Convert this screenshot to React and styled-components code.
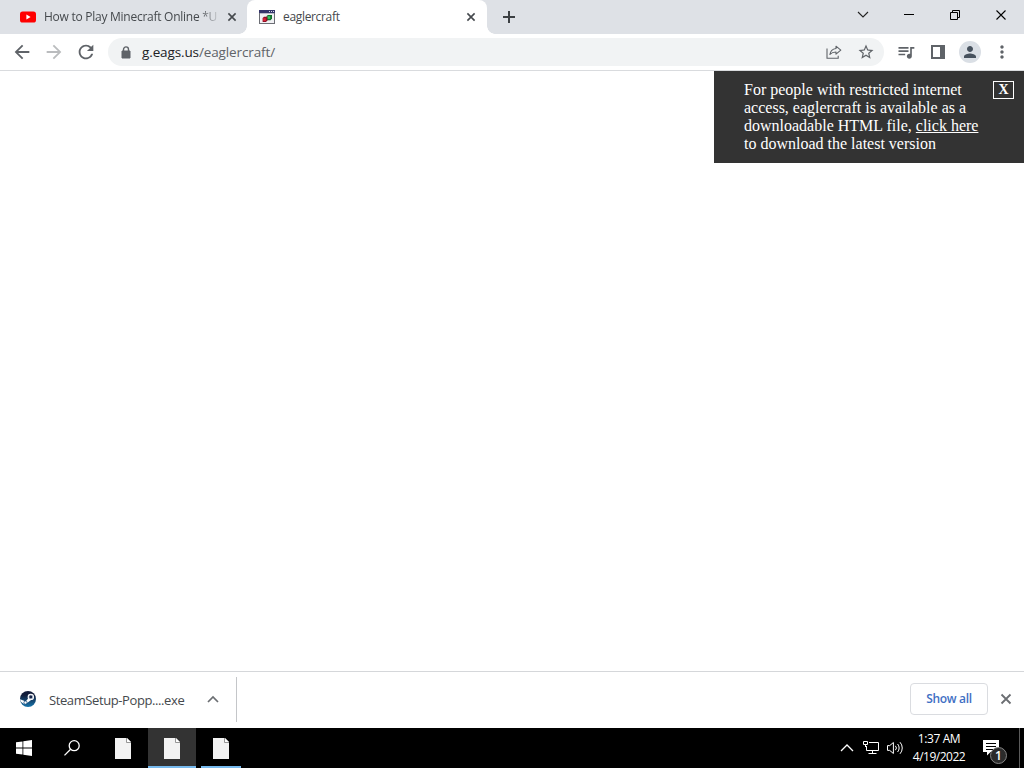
import React from 'react';
import styled, { createGlobalStyle } from 'styled-components';
import {
	MdArrowBack,
	MdArrowForward,
	MdRefresh,
	MdStarBorder,
	MdQueueMusic,
	MdPerson,
	MdMoreVert,
} from 'react-icons/md';

const UI_FONT = '"Open Sans", "Noto Sans", sans-serif';
const FRAME_COLOR = '#dee1e6';
const ICON_COLOR = '#5f6368';

const GlobalStyle = createGlobalStyle`
	* {
		box-sizing: border-box;
	}

	body {
		margin: 0;
		overflow: hidden;
	}

	svg {
		display: block;
		flex: none;
	}
`;

const StyledDesktop = styled.div`
	width: 1024px;
	height: 768px;
	display: flex;
	flex-direction: column;
	background-color: #fff;
	font-family: ${UI_FONT};
`;

const StyledText = styled.span`
	flex: none;
	white-space: nowrap;
	font-size: ${props => props.$size || 12}px;
	font-weight: ${props => props.$weight || 400};
	letter-spacing: ${props => props.$spacing || 0}px;
	color: ${props => props.$color || '#45494d'};
`;

/* tab strip */

const StyledTabStrip = styled.div`
	flex: 0 0 34px;
	display: flex;
	background-color: ${FRAME_COLOR};
`;

const StyledTab = styled.div`
	position: relative;
	width: ${props => props.$width}px;
	height: 34px;
	display: flex;
	align-items: center;
	padding: 0 ${props => props.$right}px 0 ${props => props.$left}px;
	border-radius: 8px 8px 0 0;
	background-color: ${props => (props.$active ? '#fff' : 'transparent')};

	&::before,
	&::after {
		content: '';
		display: ${props => (props.$active ? 'block' : 'none')};
		position: absolute;
		bottom: 0;
		width: 8px;
		height: 8px;
	}

	&::before {
		left: -8px;
		background: radial-gradient(circle at 0 0, transparent 7.5px, #fff 8px);
	}

	&::after {
		right: -8px;
		background: radial-gradient(circle at 100% 0, transparent 7.5px, #fff 8px);
	}
`;

const StyledTabTitle = styled.div`
	flex: 1 1 0;
	min-width: 0;
	overflow: hidden;
	margin: 0 7px 0 8px;
	line-height: 18px;
	display: flex;
	mask-image: ${props => (props.$fade ? 'linear-gradient(to left, transparent, #000 22px)' : 'none')};
`;

const StyledNewTab = styled.div`
	width: 28px;
	margin-left: 8px;
	display: flex;
	align-items: center;
	justify-content: center;
`;

const StyledWindowControls = styled.div`
	margin-left: auto;
	display: flex;
`;

const StyledControl = styled.div`
	width: 46px;
	height: 29px;
	display: flex;
	align-items: center;
	justify-content: center;
`;

/* toolbar */

const StyledToolbar = styled.div`
	flex: 0 0 37px;
	display: flex;
	align-items: center;
	gap: 4px;
	padding: 0 8px;
	border-bottom: 1px solid #d9dbde;
	background-color: #fff;
`;

const StyledToolButton = styled.div`
	flex: 0 0 28px;
	height: 28px;
	display: flex;
	align-items: center;
	justify-content: center;
	color: ${props => (props.$disabled ? '#babcbe' : ICON_COLOR)};
`;

const StyledOmnibox = styled.div`
	flex: 1 1 auto;
	height: 28px;
	margin: 0 4px;
	padding: 0 4px 0 13px;
	display: flex;
	align-items: center;
	gap: 4px;
	border-radius: 14px;
	background-color: #f1f3f4;
	color: ${ICON_COLOR};
`;

const StyledUrl = styled.div`
	flex: 1 1 auto;
	margin-left: 7px;
	line-height: 20px;
	display: flex;
`;

const StyledAvatar = styled.div`
	width: 22px;
	height: 22px;
	border-radius: 50%;
	display: flex;
	align-items: center;
	justify-content: center;
	background-color: #dadfe5;
	color: #47525e;
`;

/* page */

const StyledPage = styled.div`
	flex: 1 1 auto;
	display: flex;
	align-items: flex-start;
	justify-content: flex-end;
`;

const StyledNotice = styled.div`
	width: 310px;
	height: 92px;
	padding: 10px 10px 10px 30px;
	display: flex;
	align-items: flex-start;
	justify-content: space-between;
	background-color: #333;
	color: #fff;
	font-family: "Liberation Serif", serif;
`;

const StyledNoticeText = styled.div`
	width: 240px;
	font-size: 16px;
	line-height: 18px;
	white-space: nowrap;

	> a {
		color: #fff;
		text-decoration: underline;
	}
`;

const StyledNoticeClose = styled.div`
	width: 21px;
	height: 18px;
	border: 1px solid #fff;
	font-size: 14px;
	font-weight: 700;
	line-height: 16px;
	text-align: center;
`;

/* download shelf */

const StyledShelf = styled.div`
	flex: 0 0 57px;
	display: flex;
	align-items: center;
	border-top: 1px solid #d5d7da;
	padding: 0 13px 2px 0;
`;

const StyledDownload = styled.div`
	width: 237px;
	height: 45px;
	padding: 0 18px 0 20px;
	display: flex;
	align-items: center;
	border-right: 1px solid #c4c6c9;

	> span {
		flex: 1 1 auto;
		margin-left: 13px;
		padding-top: 2px;
	}
`;

const StyledShowAll = styled.div`
	width: 78px;
	height: 32px;
	margin: 0 13px 0 auto;
	padding-bottom: 1px;
	display: flex;
	align-items: center;
	justify-content: center;
	border: 1px solid #dadce0;
	border-radius: 4px;
`;

/* taskbar */

const StyledTaskbar = styled.div`
	flex: 0 0 40px;
	display: flex;
	background-color: #000;
`;

const StyledTask = styled.div`
	width: ${props => props.$width || 48}px;
	margin-left: ${props => props.$gap || 0}px;
	height: 40px;
	padding-top: ${props => (props.$underline ? 2 : 0)}px;
	display: flex;
	align-items: center;
	justify-content: center;
	background-color: ${props => (props.$active ? '#333' : 'transparent')};
	border-bottom: ${props => (props.$underline ? '2px solid #76b9ed' : '0')};
`;

const StyledTray = styled.div`
	margin-left: auto;
	display: flex;
	align-items: center;
`;

const StyledTrayIcon = styled.div`
	width: 24px;
	display: flex;
	justify-content: center;
`;

const StyledClock = styled.div`
	width: 64px;
	display: flex;
	flex-direction: column;
	align-items: center;
	line-height: 18px;
`;

const StyledNotifications = styled.div`
	position: relative;
	width: 49px;
	height: 40px;
	padding: 12px 0 0 12px;
	border-right: 1px solid #5a5a5a;
	margin-right: 4px;
`;

const StyledBadge = styled.div`
	position: absolute;
	left: 19px;
	top: 19px;
	width: 17px;
	height: 17px;
	border: 1px solid #858585;
	border-radius: 50%;
	background-color: #2b2b2b;
	color: #fff;
	font-size: 12px;
	font-weight: 600;
	line-height: 15px;
	text-align: center;
`;

const Cross = ({ size = 8, width = 1.6, color = '#45494d' }) => (
	<svg width={size} height={size} viewBox="0 0 10 10" stroke={color} strokeWidth={(width * 10) / size} overflow="visible">
		<path d="M.5.5l9 9M9.5.5l-9 9" />
	</svg>
);

const Chevron = ({ up, width = 10, height = 5, stroke = 1.2, color }) => (
	<svg width={width} height={height} fill="none" stroke={color} strokeWidth={stroke} overflow="visible">
		<path d={up ? `M0 ${height}L${width / 2} 0L${width} ${height}` : `M0 0L${width / 2} ${height}L${width} 0`} />
	</svg>
);

const YoutubeIcon = () => (
	<svg width="16" height="12" viewBox="0 0 16 12">
		<rect y=".5" width="16" height="11" rx="2.6" fill="#f00" />
		<path d="M6.4 3.6v4.8L10.6 6z" fill="#fff" />
	</svg>
);

const EaglerIcon = () => (
	<svg width="16" height="14" viewBox="0 0 16 14">
		<rect x=".5" y=".5" width="15" height="13" fill="#f1f1f4" stroke="#6c6e75" />
		<path d="M0 0h16v3H0z" fill="#34356b" />
		<path d="M1 3h14v1H1z" fill="#b9bac6" />
		<path d="M10 1.5h1M12 1.5h1M14 1.5h1" stroke="#d9d9e8" />
		<path d="M7.6 6l1.4-1h4v3.6l-1.4 1.6h-4z" fill="#12702c" />
		<path d="M8.4 6.2h2.8v2.6H8.4z" fill="#3cc964" />
		<path d="M3.6 8L5 6.8h3.4v3.6L7 12H3.6z" fill="#8d1024" />
		<path d="M4.2 8.2h2.6v2.8H4.2z" fill="#df2238" />
	</svg>
);

const LockIcon = () => (
	<svg width="10" height="13" viewBox="0 0 10 13">
		<path d="M1 5h8v7H1z" fill={ICON_COLOR} stroke={ICON_COLOR} strokeLinejoin="round" />
		<path d="M2.5 5V3.4a2.5 2.5 0 0 1 5 0V5" fill="none" stroke={ICON_COLOR} strokeWidth="1.4" />
	</svg>
);

const ShareIcon = () => (
	<svg width="16" height="14" viewBox="0 0 16 14" fill="none" stroke={ICON_COLOR} strokeWidth="1.1">
		<path d="M1 3.6v9.6h11.2v-2.4" />
		<path d="M10 1.2l4.8 4-4.8 4V7C7.4 7 5.4 7.7 3.9 9.5 4.4 6 6.6 3.9 10 3.5z" strokeLinejoin="round" />
	</svg>
);

const SidePanelIcon = () => (
	<svg width="14" height="14">
		<path d="M1 1h12v12H1z" fill="none" stroke={ICON_COLOR} strokeWidth="2" />
		<path d="M9 1h4v12H9z" fill={ICON_COLOR} />
	</svg>
);

const SteamIcon = () => (
	<svg width="16" height="16" viewBox="0 0 16 16">
		<defs>
			<linearGradient id="steam" x1="0" y1="0" x2="0" y2="1">
				<stop offset=".25" stopColor="#111b39" />
				<stop offset="1" stopColor="#1676ae" />
			</linearGradient>
		</defs>
		<circle cx="8" cy="8" r="8" fill="url(#steam)" />
		<path d="M.1 8.2l4.5 1.9 1 .3 2.8-3.2 3 1.5-3.6 2.7-1.3 1.2-2 .7-2.3-1.5L.6 10.6z" fill="#fff" />
		<circle cx="10.8" cy="5.9" r="3.2" fill="#fff" />
		<circle cx="10.8" cy="5.9" r="1.9" fill="#18264a" stroke="#b9c5d5" strokeWidth=".6" />
		<circle cx="5.5" cy="11.6" r="1.6" fill="#fff" stroke="#174a7d" strokeWidth=".8" />
	</svg>
);

const WindowsIcon = () => (
	<svg width="16" height="16" viewBox="0 0 16 16" fill="#fff">
		<path d="M0 2.3L6.5 1.4V7.6H0zM7.3 1.3L16 0v7.6H7.3zM0 8.4h6.5v6.2L0 13.7zM7.3 8.4H16V16l-8.7-1.2z" />
	</svg>
);

const SearchIcon = () => (
	<svg width="16" height="16" viewBox="0 0 16 16" fill="none" stroke="#fff" strokeWidth="1.3">
		<circle cx="10.2" cy="5.7" r="5" />
		<path d="M6.6 9.3L.5 15.4" />
	</svg>
);

const FileIcon = () => (
	<svg width="16" height="21" viewBox="0 0 16 21">
		<path d="M0 0h12l4 4v17H0z" fill="#f3f3f3" />
		<path d="M11.5 0v4.5H16" fill="#fff" stroke="#8b8b8b" strokeWidth=".9" />
		<path d="M12 0l4 4" stroke="#a6a6a6" strokeWidth=".8" />
	</svg>
);

const NetworkIcon = () => (
	<svg width="16" height="14" viewBox="0 0 16 14" fill="none" stroke="#fff">
		<path d="M6 1.5h9.5v8h-12V5M9.5 9.5v3M5.5 12.5h8" />
		<path d="M.5.5h4v3h-4zM2.5 3.5V6" />
	</svg>
);

const SpeakerIcon = () => (
	<svg width="17" height="14" viewBox="0 0 17 14" fill="none" stroke="#fff">
		<path d="M.5 4.6h2.2L6.4 1.5v11L2.7 9.4H.5z" />
		<path d="M8.4 4.8a3.2 3.2 0 0 1 0 4.4M10.6 3a6 6 0 0 1 0 8M13 1.2a8.6 8.6 0 0 1 0 11.6" />
	</svg>
);

const MessageIcon = () => (
	<svg width="16" height="16" viewBox="0 0 16 16">
		<path d="M0 0h16v12H7.5L4 15.5V12H0z" fill="#fff" />
		<path d="M3 3.5h10M3 6.5h10M3 9.5h7" stroke="#000" />
	</svg>
);

const TabStrip = () => (
	<StyledTabStrip>
		<StyledTab $width={247} $left={20} $right={11}>
			<YoutubeIcon />
			<StyledTabTitle $fade>
				<StyledText $spacing={-0.26}>How to Play Minecraft Online *U</StyledText>
			</StyledTabTitle>
			<Cross />
		</StyledTab>
		<StyledTab $width={240} $left={12} $right={12} $active>
			<EaglerIcon />
			<StyledTabTitle>
				<StyledText $spacing={-0.33}>eaglercraft</StyledText>
			</StyledTabTitle>
			<Cross />
		</StyledTab>
		<StyledNewTab>
			<svg width="12" height="12" stroke="#3c4043" strokeWidth="2">
				<path d="M6 0v12M0 6h12" />
			</svg>
		</StyledNewTab>
		<StyledWindowControls>
			<StyledControl>
				<Chevron color="#222" stroke={1.1} />
			</StyledControl>
			<StyledControl>
				<svg width="10" height="1"><path d="M0 0h10v1H0z" /></svg>
			</StyledControl>
			<StyledControl>
				<svg width="10" height="10" fill="none" stroke="#000">
					<path d="M.5 2.5h7v7h-7zM2.5 2.5v-2h7v7h-2" />
				</svg>
			</StyledControl>
			<StyledControl>
				<Cross size={10} width={1.1} color="#000" />
			</StyledControl>
		</StyledWindowControls>
	</StyledTabStrip>
);

const Toolbar = () => (
	<StyledToolbar>
		<StyledToolButton><MdArrowBack size={22} /></StyledToolButton>
		<StyledToolButton $disabled><MdArrowForward size={22} /></StyledToolButton>
		<StyledToolButton><MdRefresh size={22} /></StyledToolButton>
		<StyledOmnibox>
			<LockIcon />
			<StyledUrl>
				<StyledText $size={13.5} $color="#202124" $spacing={-0.12}>g.eags.us</StyledText>
				<StyledText $size={13.5} $color="#5f6368" $spacing={-0.12}>/eaglercraft/</StyledText>
			</StyledUrl>
			<StyledToolButton><ShareIcon /></StyledToolButton>
			<StyledToolButton><MdStarBorder size={18} /></StyledToolButton>
		</StyledOmnibox>
		<StyledToolButton><MdQueueMusic size={20} /></StyledToolButton>
		<StyledToolButton><SidePanelIcon /></StyledToolButton>
		<StyledToolButton>
			<StyledAvatar><MdPerson size={18} /></StyledAvatar>
		</StyledToolButton>
		<StyledToolButton><MdMoreVert size={20} /></StyledToolButton>
	</StyledToolbar>
);

const Taskbar = () => (
	<StyledTaskbar>
		<StyledTask><WindowsIcon /></StyledTask>
		<StyledTask><SearchIcon /></StyledTask>
		<StyledTask $gap={3}><FileIcon /></StyledTask>
		<StyledTask $gap={1} $active $underline><FileIcon /></StyledTask>
		<StyledTask $gap={5} $width={40} $underline><FileIcon /></StyledTask>
		<StyledTray>
			<StyledTrayIcon><Chevron up width={12} height={6} stroke={1.3} color="#fff" /></StyledTrayIcon>
			<StyledTrayIcon><NetworkIcon /></StyledTrayIcon>
			<StyledTrayIcon><SpeakerIcon /></StyledTrayIcon>
			<StyledClock>
				<StyledText $color="#fff" $spacing={-0.4}>1:37 AM</StyledText>
				<StyledText $color="#fff" $spacing={-0.5}>4/19/2022</StyledText>
			</StyledClock>
			<StyledNotifications>
				<MessageIcon />
				<StyledBadge>1</StyledBadge>
			</StyledNotifications>
		</StyledTray>
	</StyledTaskbar>
);

const App = () => (
	<StyledDesktop>
		<GlobalStyle />
		<TabStrip />
		<Toolbar />
		<StyledPage>
			<StyledNotice>
				<StyledNoticeText>
					For people with restricted internet<br />
					access, eaglercraft is available as a<br />
					downloadable HTML file, <a>click here</a><br />
					to download the latest version
				</StyledNoticeText>
				<StyledNoticeClose>X</StyledNoticeClose>
			</StyledNotice>
		</StyledPage>
		<StyledShelf>
			<StyledDownload>
				<SteamIcon />
				<StyledText $size={13} $spacing={-0.4}>SteamSetup-Popp....exe</StyledText>
				<Chevron up stroke={1.7} color="#6b6e72" />
			</StyledDownload>
			<StyledShowAll>
				<StyledText $weight={600} $color="#3f6fc4" $spacing={-0.3}>Show all</StyledText>
			</StyledShowAll>
			<Cross size={10} width={1.8} color="#6b6e72" />
		</StyledShelf>
		<Taskbar />
	</StyledDesktop>
);

export default App;
